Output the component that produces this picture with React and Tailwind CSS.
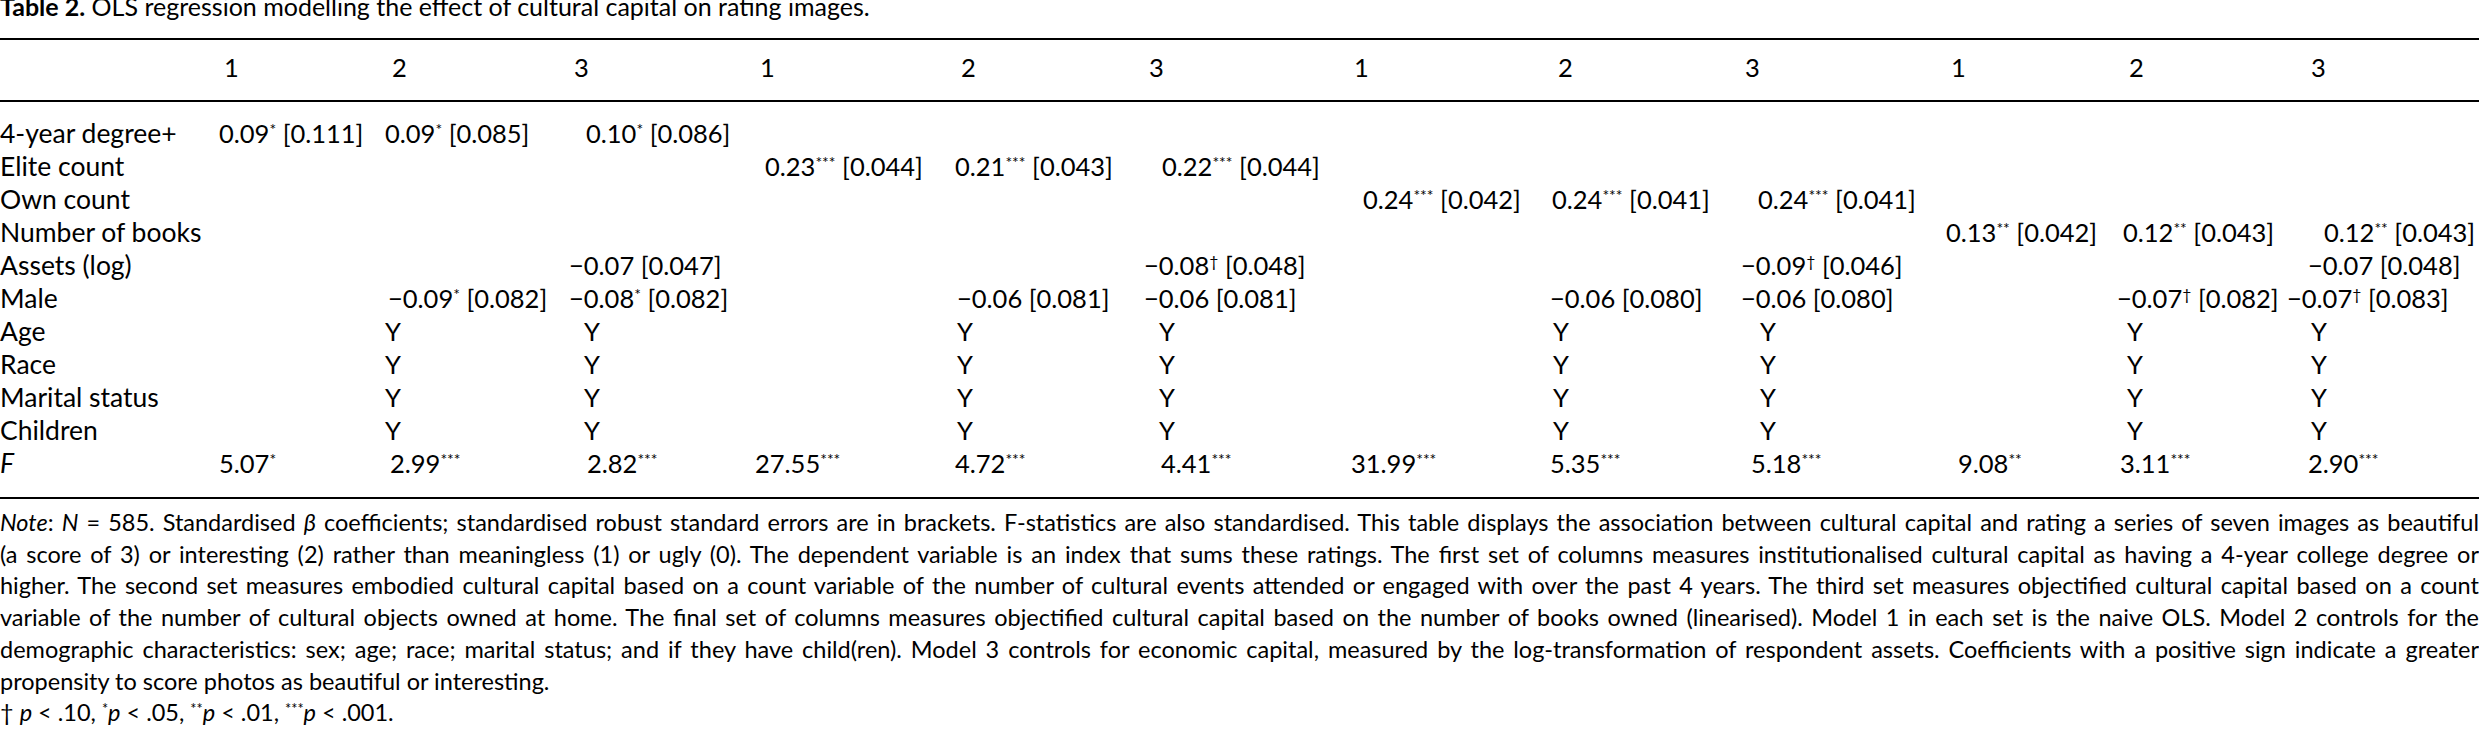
const grid =
  'grid grid-cols-[216px_169px_181px_189px_195px_194px_207px_199px_190px_206px_174px_161px_198px]'

const heads = [
  ['1', 'pl-[8px]'],
  ['2', 'pl-[7px]'],
  ['3', 'pl-[8px]'],
  ['1', 'pl-[5px]'],
  ['2', 'pl-[11px]'],
  ['3', 'pl-[5px]'],
  ['1', 'pl-[3px]'],
  ['2', 'pl-[8px]'],
  ['3', 'pl-[5px]'],
  ['1', 'pl-[5px]'],
  ['2', 'pl-[9px]'],
  ['3', 'pl-[30px]'],
]

// cells keyed by column index (1..12): [value, stars, se, padding]
const yes = {
  2: ['Y', '', '', 'pl-0'],
  3: ['Y', '', '', 'pl-[18px]'],
  5: ['Y', '', '', 'pl-[7px]'],
  6: ['Y', '', '', 'pl-[15px]'],
  8: ['Y', '', '', 'pl-[3px]'],
  9: ['Y', '', '', 'pl-[20px]'],
  11: ['Y', '', '', 'pl-[7px]'],
  12: ['Y', '', '', 'pl-[30px]'],
}

const rows = [
  {
    label: '4-year degree+',
    cells: {
      1: ['0.09', '*', '0.111', 'pl-[3px]'],
      2: ['0.09', '*', '0.085', 'pl-0'],
      3: ['0.10', '*', '0.086', 'pl-[20px]'],
    },
  },
  {
    label: 'Elite count',
    cells: {
      4: ['0.23', '***', '0.044', 'pl-[10px]'],
      5: ['0.21', '***', '0.043', 'pl-[5px]'],
      6: ['0.22', '***', '0.044', 'pl-[18px]'],
    },
  },
  {
    label: 'Own count',
    cells: {
      7: ['0.24', '***', '0.042', 'pl-[12px]'],
      8: ['0.24', '***', '0.041', 'pl-[2px]'],
      9: ['0.24', '***', '0.041', 'pl-[18px]'],
    },
  },
  {
    label: 'Number of books',
    cells: {
      10: ['0.13', '**', '0.042', 'pl-0'],
      11: ['0.12', '**', '0.043', 'pl-[3px]'],
      12: ['0.12', '**', '0.043', 'pl-[43px]'],
    },
  },
  {
    label: 'Assets (log)',
    cells: {
      3: ['−0.07', '', '0.047', 'pl-[3px]'],
      6: ['−0.08', '†', '0.048', 'pl-0'],
      9: ['−0.09', '†', '0.046', 'pl-[1px]'],
      12: ['−0.07', '', '0.048', 'pl-[27px]'],
    },
  },
  {
    label: 'Male',
    cells: {
      2: ['−0.09', '*', '0.082', 'pl-[3px]'],
      3: ['−0.08', '*', '0.082', 'pl-[3px]'],
      5: ['−0.06', '', '0.081', 'pl-[7px]'],
      6: ['−0.06', '', '0.081', 'pl-0'],
      8: ['−0.06', '', '0.080', 'pl-0'],
      9: ['−0.06', '', '0.080', 'pl-[1px]'],
      11: ['−0.07', '†', '0.082', '-ml-[3px]'],
      12: ['−0.07', '†', '0.083', 'pl-[6px]'],
    },
  },
  { label: 'Age', cells: yes },
  { label: 'Race', cells: yes },
  { label: 'Marital status', cells: yes },
  { label: 'Children', cells: yes },
  {
    label: 'F',
    italic: true,
    cells: {
      1: ['5.07', '*', '', 'pl-[3px]'],
      2: ['2.99', '***', '', 'pl-[5px]'],
      3: ['2.82', '***', '', 'pl-[21px]'],
      4: ['27.55', '***', '', 'pl-0'],
      5: ['4.72', '***', '', 'pl-[5px]'],
      6: ['4.41', '***', '', 'pl-[17px]'],
      7: ['31.99', '***', '', 'pl-0'],
      8: ['5.35', '***', '', 'pl-0'],
      9: ['5.18', '***', '', 'pl-[11px]'],
      10: ['9.08', '**', '', 'pl-[12px]'],
      11: ['3.11', '***', '', 'pl-0'],
      12: ['2.90', '***', '', 'pl-[27px]'],
    },
  },
]

function Cell({ cell }) {
  if (!cell) return <div />
  const [v, s, se, pad] = cell
  return (
    <div className={`whitespace-nowrap ${pad}`}>
      {v}
      {s && <sup className="text-[62%]">{s}</sup>}
      {se && ` [${se}]`}
    </div>
  )
}

const line = 'whitespace-nowrap text-justify [text-align-last:justify]'

export default function App() {
  return (
    <div className="w-[2479px] h-[744px] overflow-hidden bg-white text-black [font-family:Lato,sans-serif]">
      <div className="-mt-[6px] [font-size:25px] leading-[24px] whitespace-nowrap">
        <span className="font-bold">Table 2.</span> OLS regression modelling the effect of cultural capital on rating
        images.
      </div>

      <div className="mt-[20px] h-[2px] bg-black" />

      <div className="[font-size:25.5px]">
        <div className={`${grid} pt-[11px] pb-[16px] leading-[33px]`}>
          <div />
          {heads.map(([h, pad], i) => (
            <div key={i} className={pad}>
              {h}
            </div>
          ))}
        </div>

        <div className="h-[2px] bg-black" />

        <div className="pt-[15px]">
          {rows.map((r) => (
            <div key={r.label} className={`${grid} h-[33px] leading-[33px]`}>
              <div className={`whitespace-nowrap [font-size:26.5px] ${r.italic ? 'italic' : ''}`}>{r.label}</div>
              {Array.from({ length: 12 }, (_, i) => (
                <Cell key={i} cell={r.cells[i + 1]} />
              ))}
            </div>
          ))}
        </div>
      </div>

      <div className="mt-[17px] h-[2px] bg-black" />

      <div className="mt-[8px] [font-size:23.5px] leading-[31.7px]">
        <div className={line}>
          <i>Note</i>: <i>N</i> = 585. Standardised <i>β</i> coefficients; standardised robust standard errors are in
          brackets. F-statistics are also standardised. This table displays the association between cultural capital and
          rating a series of seven images as beautiful
        </div>
        <div className={line}>
          (a score of 3) or interesting (2) rather than meaningless (1) or ugly (0). The dependent variable is an index
          that sums these ratings. The first set of columns measures institutionalised cultural capital as having a
          4-year college degree or
        </div>
        <div className={line}>
          higher. The second set measures embodied cultural capital based on a count variable of the number of cultural
          events attended or engaged with over the past 4 years. The third set measures objectified cultural capital
          based on a count
        </div>
        <div className={line}>
          variable of the number of cultural objects owned at home. The final set of columns measures objectified
          cultural capital based on the number of books owned (linearised). Model 1 in each set is the naive OLS. Model 2
          controls for the
        </div>
        <div className={line}>
          demographic characteristics: sex; age; race; marital status; and if they have child(ren). Model 3 controls for
          economic capital, measured by the log-transformation of respondent assets. Coefficients with a positive sign
          indicate a greater
        </div>
        <div className="whitespace-nowrap">propensity to score photos as beautiful or interesting.</div>
        <div className="whitespace-nowrap">
          † <i>p</i> &lt; .10, <sup className="text-[62%]">*</sup>
          <i>p</i> &lt; .05, <sup className="text-[62%]">**</sup>
          <i>p</i> &lt; .01, <sup className="text-[62%]">***</sup>
          <i>p</i> &lt; .001.
        </div>
      </div>
    </div>
  )
}
